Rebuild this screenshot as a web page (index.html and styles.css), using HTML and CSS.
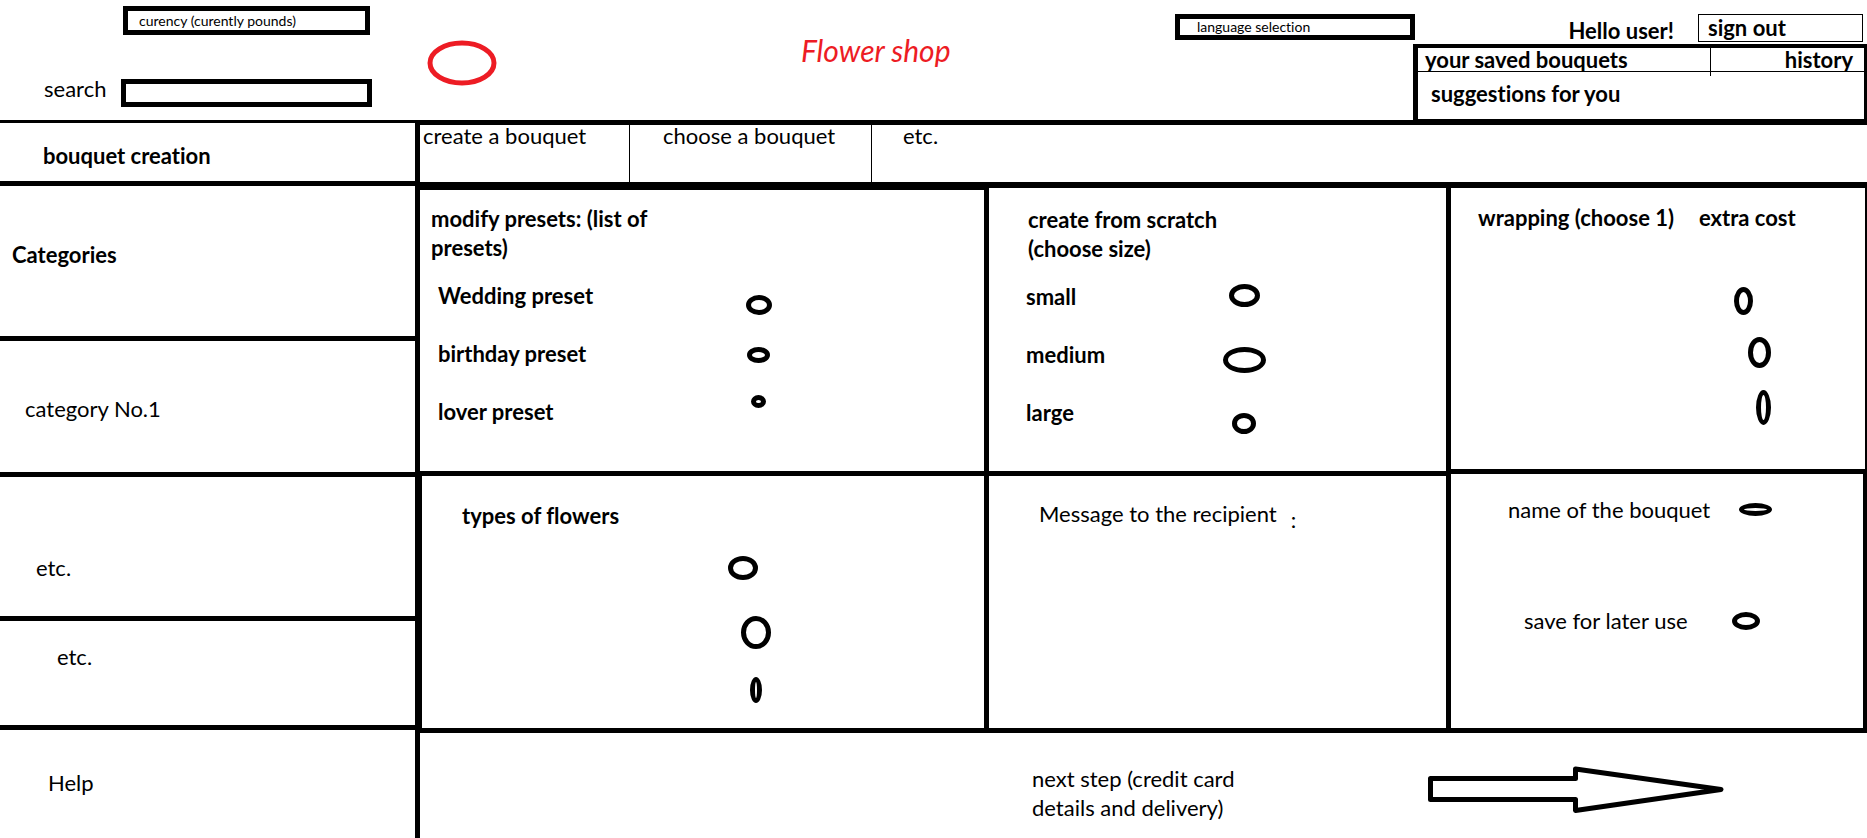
FILE: index.html
```html
<!DOCTYPE html>
<html lang="en">
<head>
<meta charset="utf-8">
<title>Flower shop</title>
<link rel="stylesheet" href="styles.css">
</head>
<body>
<header class="top">
  <form class="tools">
    <select class="box currency" aria-label="currency"><option>curency (curently pounds)</option></select>
    <label class="search-label" for="search">search</label>
    <input class="box search" id="search" type="search">
  </form>
  <svg class="logo" viewBox="0 0 70 46" width="70" height="46" aria-hidden="true"><ellipse cx="35" cy="23" rx="32" ry="20" fill="none" stroke="#ed1c24" stroke-width="5"/></svg>
  <h1 class="title">Flower shop</h1>
  <div class="language-area">
    <select class="box language" aria-label="language"><option>language selection</option></select>
  </div>
  <div class="account">
    <div class="greeting">
      <span class="hello">Hello user!</span>
      <button class="sign-out" type="button">sign out</button>
    </div>
    <nav class="account-links">
      <a class="saved" href="#saved">your saved bouquets</a>
      <a class="history" href="#history">history</a>
      <a class="suggestions" href="#suggestions">suggestions for you</a>
    </nav>
  </div>
</header>
<div class="page">
  <aside class="sidebar">
    <h2 class="side-cell side-title">bouquet creation</h2>
    <h2 class="side-cell categories">Categories</h2>
    <a class="side-cell category" href="#category-1">category No.1</a>
    <a class="side-cell more" href="#more">etc.</a>
    <a class="side-cell other" href="#other">etc.</a>
    <a class="side-cell help" href="#help">Help</a>
  </aside>
  <main class="content">
    <nav class="tabs">
      <a class="tab" href="#create">create a bouquet</a>
      <a class="tab choose" href="#choose">choose a bouquet</a>
      <a class="tab extra" href="#etc">etc.</a>
    </nav>
    <div class="board">
      <div class="column">
        <section class="cell presets">
          <h2 class="heading">modify presets: (list of presets)</h2>
          <div class="options">
            <div class="labels">
              <label for="wedding">Wedding preset</label>
              <label for="birthday">birthday preset</label>
              <label for="lover">lover preset</label>
            </div>
            <div class="marks">
              <input class="mark wedding" id="wedding" type="radio" name="preset">
              <input class="mark birthday" id="birthday" type="radio" name="preset">
              <input class="mark lover" id="lover" type="radio" name="preset">
            </div>
          </div>
        </section>
        <section class="cell flowers">
          <h2 class="heading">types of flowers</h2>
          <div class="marks">
            <input class="mark flower-a" type="radio" name="flower" aria-label="flower 1">
            <input class="mark flower-b" type="radio" name="flower" aria-label="flower 2">
            <input class="mark flower-c" type="radio" name="flower" aria-label="flower 3">
          </div>
        </section>
      </div>
      <div class="column ruled">
        <section class="cell scratch">
          <h2 class="heading">create from scratch (choose size)</h2>
          <div class="options">
            <div class="labels">
              <label for="small">small</label>
              <label for="medium">medium</label>
              <label for="large">large</label>
            </div>
            <div class="marks">
              <input class="mark small" id="small" type="radio" name="size">
              <input class="mark medium" id="medium" type="radio" name="size">
              <input class="mark large" id="large" type="radio" name="size">
            </div>
          </div>
        </section>
        <section class="cell message">
          <label class="message-label" for="message">Message to the recipient <span class="colon">:</span></label>
          <textarea class="message-text" id="message"></textarea>
        </section>
      </div>
      <div class="column ruled last">
        <section class="cell wrapping">
          <h2 class="heading">wrapping (choose 1)</h2>
          <div>
            <h2 class="heading">extra cost</h2>
            <div class="marks">
              <input class="mark wrap-a" type="radio" name="wrap" aria-label="wrapping 1">
              <input class="mark wrap-b" type="radio" name="wrap" aria-label="wrapping 2">
              <input class="mark wrap-c" type="radio" name="wrap" aria-label="wrapping 3">
            </div>
          </div>
        </section>
        <section class="cell finish">
          <div class="name-row">
            <label for="name">name of the bouquet</label>
            <input class="mark name" id="name" type="text">
          </div>
          <div class="save-row">
            <label for="save">save for later use</label>
            <input class="mark save" id="save" type="checkbox">
          </div>
        </section>
      </div>
    </div>
    <footer class="next">
      <button class="next-button" type="button">
        <span class="next-text">next step (credit card details and delivery)</span>
        <svg class="arrow" viewBox="0 0 296 48" width="296" height="48" aria-hidden="true"><path d="M2.500 12.500H147.500V3L293 23.500L147.500 44.500V33.500H2.500Z" fill="none" stroke="#000" stroke-width="5" stroke-linejoin="round"/></svg>
      </button>
    </footer>
  </main>
</div>
</body>
</html>
```
FILE: styles.css
```css
* { box-sizing: border-box; }

body {
  margin: 0;
  min-height: 100vh;
  display: flex;
  flex-direction: column;
  background: #fff;
  color: #000;
  font: 22px/29px Lato, "Liberation Sans", sans-serif;
  font-variant-ligatures: none;
}

h1, h2 { margin: 0; font-size: inherit; }
a { color: inherit; text-decoration: none; }
button, input, select, textarea {
  margin: 0;
  padding: 0;
  border: 0;
  border-radius: 0;
  background: none;
  color: inherit;
  font: inherit;
  font-variant-ligatures: none;
  appearance: none;
}

/* Header */
.top {
  display: grid;
  grid-template-columns: 415fr 386fr 374fr 238fr 454fr;
  min-height: 120px;
}
.tools {
  display: grid;
  grid-template-columns: 77px 251px;
  grid-template-rows: 29px 28px;
  row-gap: 44px;
  padding: 6px 0 0 44px;
}
.box { border: 5px solid #000; }
.currency {
  grid-column: 2;
  width: 247px;
  margin-left: 2px;
  padding-left: 11px;
  font-size: 14px;
  line-height: 19px;
}
.search-label { line-height: 20px; }
.search { width: 100%; }
.logo { margin: 40px 0 0 12px; }
.title {
  padding-top: 31px;
  color: #ed1c24;
  font-size: 30px;
  line-height: 38px;
  font-weight: 400;
  font-style: italic;
}
.language-area { padding-top: 14px; }
.language {
  display: block;
  width: calc(100% + 2px);
  height: 26px;
  padding-left: 17px;
  font-size: 14px;
  line-height: 16px;
}
.account { font-weight: 700; }
.greeting {
  display: flex;
  justify-content: flex-end;
  gap: 24px;
  height: 44px;
  padding: 14px 4px 0 0;
}
.hello { padding-top: 2px; }
.sign-out {
  width: 165px;
  height: 28px;
  padding-left: 9px;
  border: 1px solid #000;
  font-weight: 700;
  line-height: 24px;
  text-align: left;
}
.account-links {
  display: grid;
  grid-template-columns: 293fr 153fr;
  grid-template-rows: 24px 47px;
  border: solid #000;
  border-width: 4px 3px 1px 5px;
  line-height: 24px;
}
.saved, .history { border-bottom: 1px solid #000; }
.saved { position: relative; padding-left: 7px; }
.saved::after {
  content: "";
  position: absolute;
  top: 0;
  right: 0;
  width: 1px;
  height: 28px;
  background: #000;
}
.history { padding-right: 11px; text-align: right; }
.suggestions { grid-column: 1 / 3; padding: 10px 0 0 13px; }

/* Page frame */
.page {
  flex: 1;
  display: grid;
  grid-template-columns: 415fr 1452fr;
}
.sidebar { display: flex; flex-direction: column; }
.side-cell { border-bottom: 5px solid #000; }
.side-title {
  min-height: 66px;
  padding: 18px 0 0 43px;
  border-top: 3px solid #000;
}
.categories { min-height: 155px; padding: 54px 0 0 12px; }
.category { min-height: 136px; padding: 53px 0 0 25px; }
.more { min-height: 144px; padding: 76px 0 0 36px; }
.other { min-height: 109px; padding: 21px 0 0 57px; }
.help { padding: 38px 0 0 48px; border: 0; }

.content {
  display: flex;
  flex-direction: column;
  border-left: 5px solid #000;
}
.tabs {
  display: grid;
  grid-template-columns: 210fr 242fr 995fr;
  min-height: 68px;
  margin-left: -5px;
  padding-left: 5px;
  border: solid #000;
  border-width: 5px 0 6px;
  line-height: 22px;
}
.tab { padding-left: 3px; border-right: 1px solid #000; }
.choose { padding-left: 33px; }
.extra { padding-left: 31px; border: 0; }

/* Board of panels */
.board {
  display: grid;
  grid-template-columns: 564fr 462fr 421fr;
}
.column {
  display: grid;
  grid-template-rows: minmax(288px, auto) minmax(257px, auto);
}
.ruled { border-left: 5px solid #000; }
.last { grid-template-rows: minmax(286px, auto) minmax(259px, auto); }
.cell { border-bottom: 5px solid #000; }
.heading { font-weight: 700; }
.options { display: grid; margin-top: 19px; font-weight: 700; }
.labels {
  display: flex;
  flex-direction: column;
  align-items: flex-start;
  gap: 29px;
}
.marks {
  display: flex;
  flex-direction: column;
  align-items: center;
  width: 44px;
}
.mark { flex: none; border: 5px solid #000; border-radius: 50%; }

.presets { padding: 14px 0 0 11px; border-top: 2px solid #000; }
.presets .heading { width: 240px; }
.presets .options { grid-template-columns: 298fr 247fr; padding-left: 7px; }
.presets .marks { gap: 32px; padding-top: 14px; }
.wedding { width: 26px; height: 20px; }
.birthday { width: 23px; height: 16px; }
.lover { width: 15px; height: 13px; }

.flowers { padding: 25px 0 0 40px; border-left: 2px solid #000; }
.flowers .marks { gap: 28px; margin: 26px 0 0 272px; }
.flower-a { width: 30px; height: 24px; margin: 0 26px 8px 0; }
.flower-b { width: 30px; height: 33px; }
.flower-c { width: 12px; height: 26px; }

.scratch { padding: 17px 0 0 37px; }
.scratch .heading { width: 210px; padding-left: 2px; }
.scratch .options { grid-template-columns: 196fr 224fr; }
.scratch .marks { gap: 40px; padding-top: 2px; }
.small { width: 31px; height: 23px; }
.medium { width: 43px; height: 26px; }
.large { width: 24px; height: 21px; }

.message {
  display: flex;
  flex-direction: column;
  padding: 23px 0 0 50px;
}
.message-label { display: flex; gap: 14px; }
.colon { padding-top: 6px; }
.message-text { flex: 1; width: 100%; resize: none; outline: 0; }

.wrapping {
  display: grid;
  grid-template-columns: 221fr 166fr;
  padding: 15px 0 0 27px;
  border-right: 2px solid #000;
}
.wrapping .marks { align-items: flex-end; gap: 22px; width: 72px; margin-top: 55px; }
.wrap-a { width: 19px; height: 28px; margin-right: 18px; }
.wrap-b { width: 23px; height: 31px; }
.wrap-c { width: 15px; height: 35px; }

.finish { padding: 21px 0 0 57px; border-right: 4px solid #000; }
.name-row, .save-row { display: flex; align-items: center; gap: 29px; }
.save-row { gap: 44px; padding: 82px 0 0 16px; }
.name { width: 33px; height: 13px; }
.save { width: 28px; height: 18px; }

/* Next step */
.next {
  display: grid;
  grid-template-columns: 564fr 883fr;
  min-height: 105px;
}
.next-button {
  grid-column: 2;
  display: grid;
  grid-template-columns: 396fr 439fr;
  align-content: start;
  padding: 31px 0 0 48px;
  text-align: left;
}
.next-text { width: 220px; }
.arrow { margin-top: 2px; }
```
